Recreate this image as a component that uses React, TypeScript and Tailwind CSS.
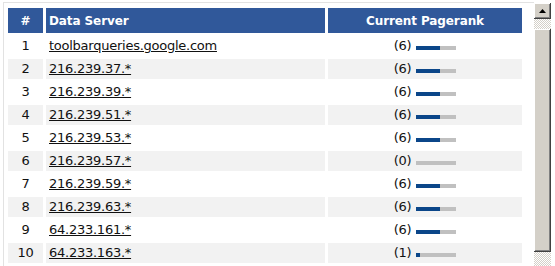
const servers: [string, number][] = [
  ['toolbarqueries.google.com', 6],
  ['216.239.37.*', 6],
  ['216.239.39.*', 6],
  ['216.239.51.*', 6],
  ['216.239.53.*', 6],
  ['216.239.57.*', 0],
  ['216.239.59.*', 6],
  ['216.239.63.*', 6],
  ['64.233.161.*', 6],
  ['64.233.163.*', 1],
];

const checker = 'bg-[repeating-conic-gradient(#d4d0c8_0_25%,#ffffff_0_50%)] bg-[length:2px_2px]';
const bevel =
  'bg-[#d4d0c8] shadow-[inset_-1px_-1px_#404040,inset_1px_1px_#ffffff,inset_-2px_-2px_#808080,inset_2px_2px_#d4d0c8]';
const head = 'h-[25px] bg-[#30589a] text-white font-bold text-[12px] tracking-[-0.1px] flex items-center';

function RankBar({ rank }: { rank: number }) {
  return (
    <div className="ml-[5px] w-[40px] h-[4px] bg-[#c0c0c0] flex">
      <div className="h-full bg-[#0b4689]" style={{ width: rank * 4 }} />
    </div>
  );
}

function Scrollbar() {
  return (
    <div className="w-[17px] mt-[3px] flex flex-col">
      <div className={`h-[16px] flex items-center justify-center ${bevel}`}>
        <svg width="7" height="4" viewBox="0 0 7 4">
          <polygon points="3.5,0 7,4 0,4" fill="#000" />
        </svg>
      </div>
      <div className={`h-[10px] ${checker}`} />
      <div className={`h-[223px] ${bevel}`} />
      <div className={`flex-1 ${checker}`} />
    </div>
  );
}

export default function App() {
  return (
    <div className="w-[555px] h-[266px] bg-white flex overflow-hidden font-['DejaVu_Sans',Verdana,sans-serif] text-[13px] tracking-[-0.25px] text-[#111]">
      <div className="flex-1 mt-[2px] ml-[3px] border-l border-t border-[#e2e2e2] pl-[4px] pt-[5px]">
        <div className="grid grid-cols-[35px_279px_194px] gap-[3px]">
          <div className={`${head} justify-center`}>#</div>
          <div className={`${head} pl-[3px]`}>Data Server</div>
          <div className={`${head} justify-center`}>Current Pagerank</div>
          {servers.map(([host, rank], i) => {
            const bg = i % 2 === 1 ? 'bg-[#f2f2f2]' : 'bg-white';
            return [
              <div key={`n${i}`} className={`h-[20px] ${bg} flex items-center justify-center`}>{i + 1}</div>,
              <div key={`h${i}`} className={`h-[20px] ${bg} flex items-center pl-[3px]`}>
                <a href="#" className="underline text-[#111]">{host}</a>
              </div>,
              <div key={`r${i}`} className={`h-[20px] ${bg} flex items-center justify-center`}>
                <div className="flex items-baseline">
                  <span>({rank})</span>
                  <RankBar rank={rank} />
                </div>
              </div>,
            ];
          })}
        </div>
      </div>
      <Scrollbar />
      <div className="w-[4px]" />
    </div>
  );
}
